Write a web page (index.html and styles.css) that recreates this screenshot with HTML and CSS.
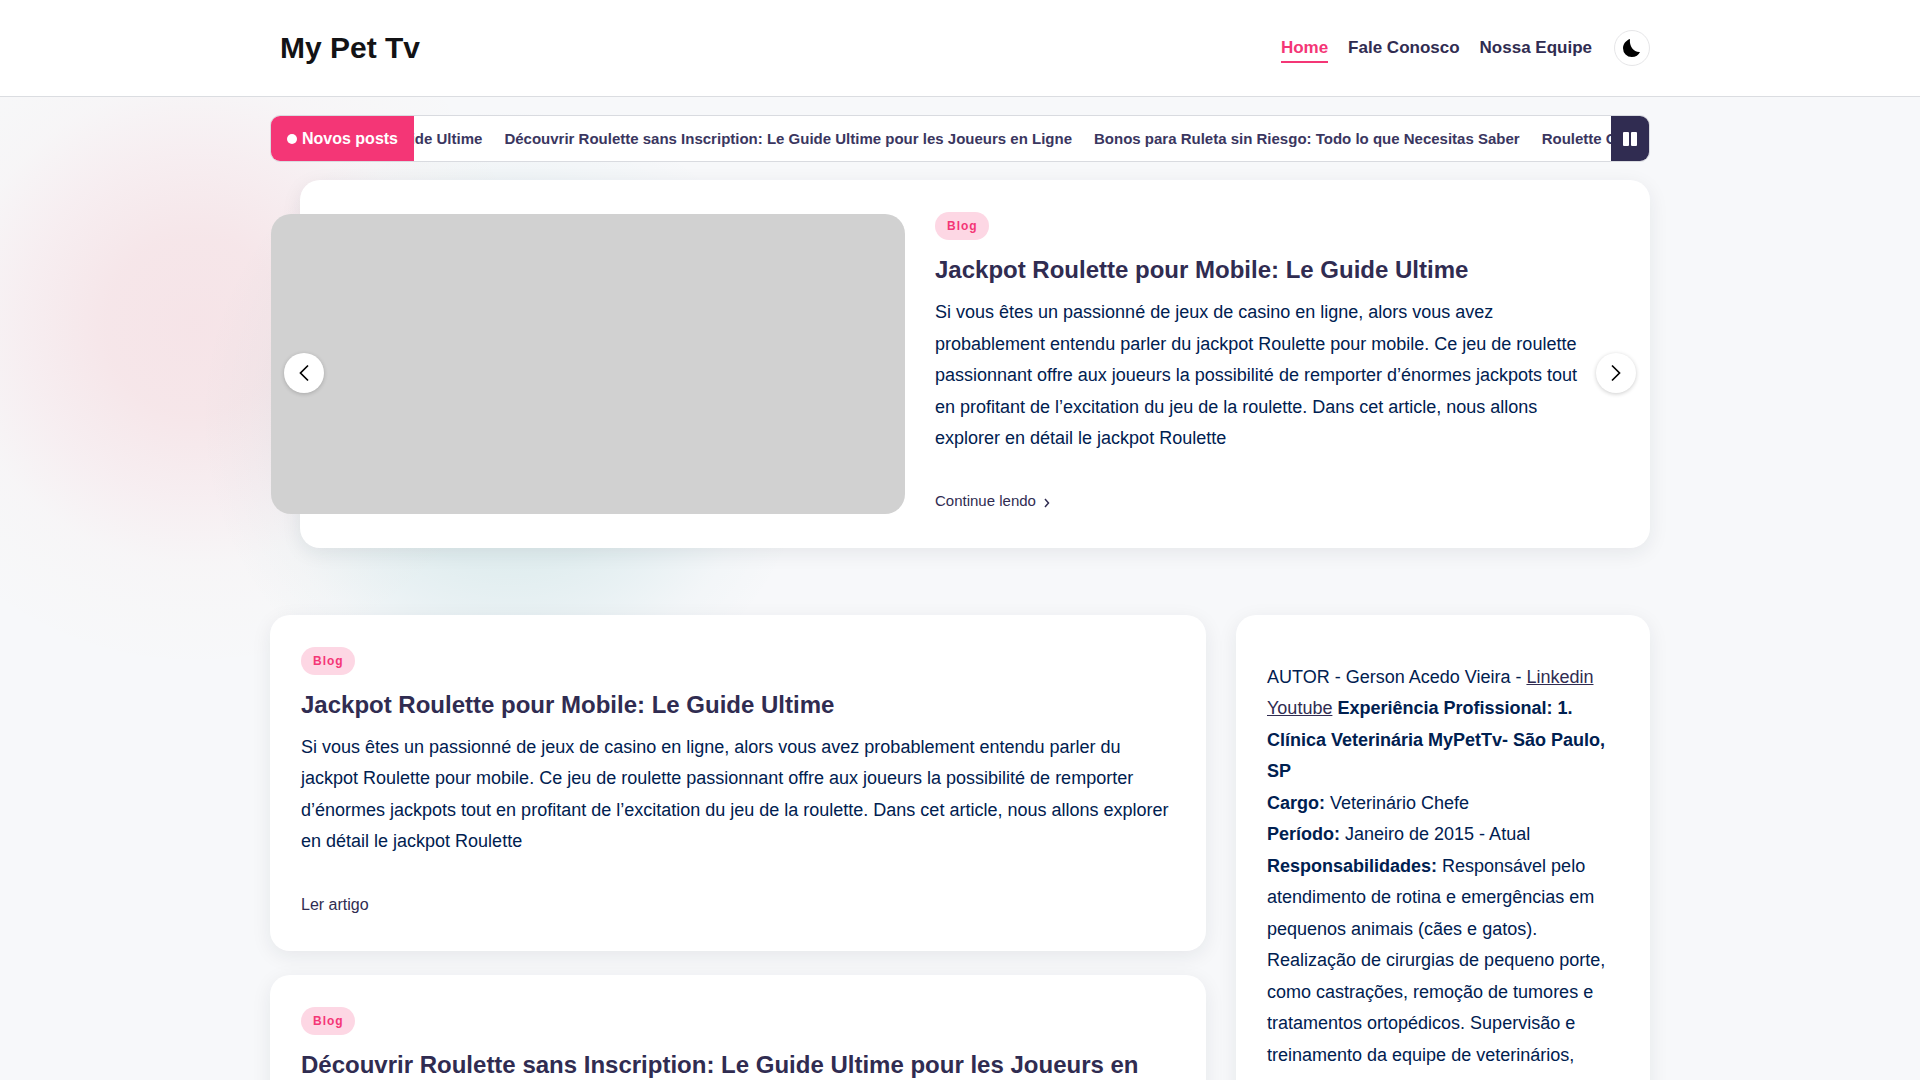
FILE: index.html
```html
<!DOCTYPE html>
<html lang="pt-BR">
<head>
<meta charset="utf-8">
<meta name="viewport" content="width=device-width, initial-scale=1">
<title>My Pet Tv</title>
<link rel="stylesheet" href="styles.css">
</head>
<body>
<header class="site-header">
  <div class="container header-inner">
    <a class="brand" href="#">My Pet Tv</a>
    <nav class="main-nav">
      <a class="nav-link active" href="#">Home</a>
      <a class="nav-link" href="#">Fale Conosco</a>
      <a class="nav-link" href="#">Nossa Equipe</a>
    </nav>
    <button class="theme-toggle" type="button" aria-label="Modo escuro">
      <svg width="18" height="18" viewBox="0 0 18 18" aria-hidden="true"><path d="M7 0C3 1.300 0 5 0 9.300A8.700 8.700 0 0 0 8.700 18c4 0 7-2 8.300-5C11 13.500 6 7.500 7 0Z"/></svg>
    </button>
  </div>
</header>
<main class="page">
  <div class="container">
    <section class="ticker">
      <div class="ticker-label"><span class="dot"></span>Novos posts</div>
      <div class="ticker-window">
        <div class="ticker-track">
          <a href="#">Jackpot Roulette pour Mobile: Le Guide Ultime</a>
          <a href="#">Découvrir Roulette sans Inscription: Le Guide Ultime pour les Joueurs en Ligne</a>
          <a href="#">Bonos para Ruleta sin Riesgo: Todo lo que Necesitas Saber</a>
          <a href="#">Roulette Online</a>
        </div>
      </div>
      <button class="ticker-pause" type="button" aria-label="Pausar">
        <svg width="14" height="14" viewBox="0 0 14 14" aria-hidden="true"><rect width="6" height="14" rx="1"/><rect x="8" width="6" height="14" rx="1"/></svg>
      </button>
    </section>

    <section class="slider">
      <article class="slide card">
        <div class="slide-image"></div>
        <div class="slide-body">
          <a class="badge" href="#">Blog</a>
          <h2 class="post-title"><a href="#">Jackpot Roulette pour Mobile: Le Guide Ultime</a></h2>
          <p class="excerpt">Si vous êtes un passionné de jeux de casino en ligne, alors vous avez probablement entendu parler du jackpot Roulette pour mobile. Ce jeu de roulette passionnant offre aux joueurs la possibilité de remporter d’énormes jackpots tout en profitant de l’excitation du jeu de la roulette. Dans cet article, nous allons explorer en détail le jackpot Roulette</p>
          <a class="read-more small" href="#">Continue lendo
            <svg width="6" height="10" viewBox="0 0 6 10" fill="none" stroke="currentColor" stroke-width="1.500" aria-hidden="true"><path d="M1 1l3.500 4L1 9"/></svg>
          </a>
        </div>
      </article>
      <button class="arrow prev" type="button" aria-label="Anterior">
        <svg width="10" height="18" viewBox="0 0 10 18" aria-hidden="true"><path d="M9 1.500L1.500 9l7.500 7.500"/></svg>
      </button>
      <button class="arrow next" type="button" aria-label="Próximo">
        <svg width="10" height="18" viewBox="0 0 10 18" aria-hidden="true"><path d="M1 1.500L8.500 9 1 16.500"/></svg>
      </button>
    </section>

    <div class="columns">
      <div class="posts">
        <article class="card post">
          <a class="badge" href="#">Blog</a>
          <h2 class="post-title"><a href="#">Jackpot Roulette pour Mobile: Le Guide Ultime</a></h2>
          <p class="excerpt">Si vous êtes un passionné de jeux de casino en ligne, alors vous avez probablement entendu parler du jackpot Roulette pour mobile. Ce jeu de roulette passionnant offre aux joueurs la possibilité de remporter d’énormes jackpots tout en profitant de l’excitation du jeu de la roulette. Dans cet article, nous allons explorer en détail le jackpot Roulette</p>
          <a class="read-more" href="#">Ler artigo</a>
        </article>
        <article class="card post">
          <a class="badge" href="#">Blog</a>
          <h2 class="post-title"><a href="#">Découvrir Roulette sans Inscription: Le Guide Ultime pour les Joueurs en Ligne</a></h2>
          <a class="read-more" href="#">Ler artigo</a>
        </article>
      </div>
      <aside class="card sidebar">
        <p>AUTOR - Gerson Acedo Vieira - <a href="#">Linkedin</a> <a href="#">Youtube</a> <strong>Experiência Profissional: 1. Clínica Veterinária MyPetTv- São Paulo, SP</strong><br>
        <strong>Cargo:</strong> Veterinário Chefe<br>
        <strong>Período:</strong> Janeiro de 2015 - Atual<br>
        <strong>Responsabilidades:</strong> Responsável pelo atendimento de rotina e emergências em pequenos animais (cães e gatos). Realização de cirurgias de pequeno porte, como castrações, remoção de tumores e tratamentos ortopédicos. Supervisão e treinamento da equipe de veterinários,</p>
      </aside>
    </div>
  </div>
</main>
</body>
</html>
```
FILE: styles.css
```css
:root {
  --pink: #f43676;
  --ink: #302c51;
  --text: #002050;
  --bg: #f7f8fa;
}

* {
  box-sizing: border-box;
}

html {
  scrollbar-width: none;
}

body {
  margin: 0;
  background: var(--bg);
  color: var(--text);
  font: 18px/1.75 "Liberation Sans", Arial, sans-serif;
}

a {
  color: inherit;
  text-decoration: none;
}

button {
  padding: 0;
  border: 0;
  background: #fff;
  display: flex;
  align-items: center;
  justify-content: center;
  cursor: pointer;
}

.container {
  max-width: 1420px;
  margin: 0 auto;
  padding: 0 20px;
}

/* Header */
.site-header {
  background: #fff;
  border-bottom: 1px solid #dbdde1;
}

.header-inner {
  display: flex;
  align-items: center;
  min-height: 96px;
}

.brand {
  margin-left: 10px;
  margin-right: auto;
  color: #131315;
  font-size: 30px;
  font-weight: 700;
  line-height: 40px;
}

.main-nav {
  display: flex;
  gap: 20px;
  margin-right: 22px;
}

.nav-link {
  padding: 2px 0;
  border-bottom: 2px solid transparent;
  border-top: 2px solid transparent;
  color: var(--ink);
  font-size: 17px;
  font-weight: 700;
  line-height: 22px;
}

.nav-link.active {
  color: var(--pink);
  border-bottom-color: var(--pink);
}

.theme-toggle {
  width: 36px;
  height: 36px;
  border: 1px solid #e6e6e8;
  border-radius: 50%;
}

/* Page background glow */
.page {
  padding: 18px 0 40px;
  background:
    radial-gradient(circle at 195px 228px, rgba(235, 50, 70, 0.1) 0, rgba(235, 50, 65, 0.09) 90px, rgba(240, 55, 75, 0.05) 175px, rgba(240, 80, 50, 0.015) 240px, rgba(240, 120, 30, 0.006) 290px, transparent 350px),
    radial-gradient(circle at 510px 320px, rgba(0, 130, 130, 0.12) 0, rgba(0, 130, 130, 0.09) 150px, rgba(0, 130, 140, 0.06) 200px, rgba(0, 130, 140, 0.02) 255px, transparent 310px);
}

/* Ticker */
.ticker {
  display: flex;
  height: 47px;
  overflow: hidden;
  background: #fff;
  border: 1px solid #d9dbe0;
  border-radius: 10px;
}

.ticker-label {
  display: flex;
  flex: none;
  align-items: center;
  gap: 5px;
  padding: 0 16px;
  background: var(--pink);
  color: #fff;
  font-size: 16px;
  font-weight: 700;
}

.dot {
  width: 10px;
  height: 10px;
  border-radius: 50%;
  background: #fff;
}

.ticker-window {
  flex: 1;
  min-width: 0;
  overflow: hidden;
}

.ticker-track {
  display: flex;
  align-items: center;
  gap: 22px;
  height: 100%;
  margin-left: -265px;
  padding-top: 2px;
  color: #3a3660;
  font-size: 15px;
  font-weight: 700;
  white-space: nowrap;
}

.ticker-pause {
  flex: none;
  width: 38px;
  background: var(--ink);
  fill: #fff;
}

/* Cards */
.card {
  background: #fff;
  border-radius: 20px;
  box-shadow: 0 5px 20px rgba(30, 35, 50, 0.08);
}

.badge {
  display: block;
  width: fit-content;
  padding: 0 11px 0 12px;
  border-radius: 14px;
  background: #fdd7e4;
  color: var(--pink);
  font-size: 12px;
  font-weight: 700;
  line-height: 28px;
  letter-spacing: 1px;
}

.post-title {
  margin: 14px 0 11px;
  color: var(--ink);
  font-size: 24px;
  line-height: 32px;
}

.excerpt {
  margin: 0 0 33px;
}

.read-more {
  display: block;
  color: var(--ink);
  font-size: 16px;
  line-height: 28px;
}

.read-more.small {
  margin-bottom: 2px;
  font-size: 15px;
  line-height: 26px;
}

.read-more svg {
  margin-left: 4px;
  vertical-align: -2px;
}

/* Slider */
.slider {
  position: relative;
  margin-top: 18px;
  padding-bottom: 18px;
}

.slide {
  display: grid;
  grid-template-columns: 11fr 13fr;
  align-items: center;
  gap: 30px;
  margin-left: 30px;
  padding: 32px 0;
}

.slide-image {
  height: 300px;
  margin-left: -29px;
  border-radius: 20px;
  background: #d1d1d1;
}

.slide-body {
  padding-right: 64px;
}

.arrow {
  position: absolute;
  top: 50%;
  width: 40px;
  height: 40px;
  margin-top: -20px;
  border-radius: 50%;
  box-shadow: 0 1px 4px rgba(0, 0, 0, 0.2);
  fill: none;
  stroke: #000;
  stroke-width: 1.7;
}

.prev {
  left: 14px;
}

.next {
  right: 14px;
}

/* Content */
.columns {
  display: grid;
  grid-template-columns: minmax(0, 1fr) 30%;
  gap: 30px;
  margin-top: 49px;
}

.posts {
  display: flex;
  flex-direction: column;
  gap: 24px;
}

.post,
.sidebar {
  padding: 32px 31px;
}

.sidebar p {
  margin: 15px 0;
}

.sidebar a {
  color: var(--ink);
  text-decoration: underline;
}

@media (max-width: 900px) {
  .columns,
  .slide {
    grid-template-columns: minmax(0, 1fr);
  }

  .slide-body {
    padding-left: 30px;
  }
}
```
